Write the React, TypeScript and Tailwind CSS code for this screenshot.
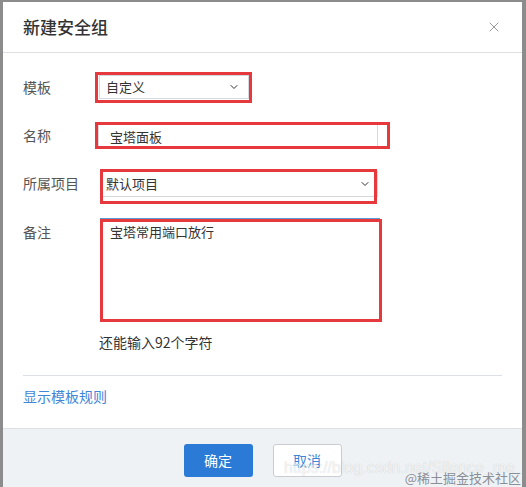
import { ChevronDown, X } from 'lucide-react';

const font = { fontFamily: '"Noto Sans CJK SC", "Noto Sans", sans-serif' };

// red annotation frame drawn over a form field
function Mark({ className }: { className: string }) {
  return <div className={`pointer-events-none absolute border-[3px] border-[#e5393e] ${className}`} />;
}

export default function App() {
  return (
    <div className="h-[487px] w-[526px] overflow-hidden bg-[#8c8c8c] pl-[3px] pt-[2px]" style={font}>
      <div className="relative flex h-[485px] w-[519px] flex-col bg-white">
        {/* header */}
        <div className="flex h-[51px] shrink-0 items-center justify-between border-b border-[#dcdfe3] pl-[20px] pr-[20px]">
          <div className="text-[17px] font-medium text-[#333]">新建安全组</div>
          <X className="h-4 w-4 text-[#999]" strokeWidth={1.5} />
        </div>

        {/* body */}
        <div className="flex flex-col px-[20px] text-[14px]">
          <div className="relative mt-[19px] flex h-[31px]">
            <div className="w-[72px] leading-[31px] text-[#555]">模板</div>
            <div className="ml-[4px] mt-[3px] flex h-[24px] w-[150px] items-center justify-between border border-[#d5d8dc] pl-[6px] pr-[8px] text-[13px] text-[#333]">
              <span>自定义</span>
              <ChevronDown className="h-3 w-3 text-[#333]" strokeWidth={2} />
            </div>
            <Mark className="left-[72px] top-0 h-[31px] w-[157px]" />
          </div>

          <div className="relative mt-[19px] flex h-[27px]">
            <div className="w-[72px] leading-[27px] text-[#555]">名称</div>
            <div className="ml-[3px] mt-[2px] flex h-[25px] w-[280px] items-center border border-[#d5d8dc] pl-[11px] text-[13px] text-[#333]">
              宝塔面板
            </div>
            <Mark className="left-[72px] top-0 h-[27px] w-[295px]" />
          </div>

          <div className="relative mt-[20px] flex h-[35px]">
            <div className="w-[72px] pt-[4px] leading-[20px] text-[#555]">所属项目</div>
            <div className="ml-[5px] mt-[2px] flex h-[26px] w-[278px] items-center justify-between border border-[#d5d8dc] pl-[5px] pr-[6px] text-[13px] text-[#333]">
              <span>默认项目</span>
              <ChevronDown className="h-3 w-3 text-[#333]" strokeWidth={2} />
            </div>
            <Mark className="left-[77px] top-0 h-[35px] w-[277px]" />
          </div>

          <div className="relative mt-[15px] flex h-[103px]">
            <div className="w-[72px] pt-[3px] leading-[20px] text-[#555]">备注</div>
            <div className="-mt-[1px] ml-[5px] h-[103px] w-[280px] border border-[#5b9bd5] pl-[9px] pt-[3px] text-[13px] leading-[20px] text-[#333]">
              宝塔常用端口放行
            </div>
            <Mark className="left-[77px] top-0 h-[103px] w-[282px]" />
          </div>

          <div className="ml-[76px] mt-[10px] leading-[20px] text-[#333]">还能输入92个字符</div>

          <div className="mt-[23px] border-t border-[#dcdfe3]" />

          <div className="mt-[10px] leading-[20px] text-[#3f86d6]">显示模板规则</div>
        </div>

        {/* footer */}
        <div className="mt-auto flex h-[59px] shrink-0 justify-center gap-[20px] border-t border-[#dcdfe3] bg-[#eff2f5] pt-[15px]">
          <button className="h-[33px] w-[69px] rounded-[3px] bg-[#2a7ad6] text-[14px] text-white">确定</button>
          <button className="h-[33px] w-[69px] rounded-[3px] border border-[#c9cdd2] bg-white text-[14px] text-[#3f86d6]">取消</button>
        </div>

        {/* watermarks */}
        <div
          className="pointer-events-none absolute left-[281px] top-[458px] text-[16px] leading-none text-white/75"
          style={{ fontFamily: '"Liberation Sans", sans-serif', textShadow: '0 0 1px rgba(0,0,0,0.2)' }}
        >
          https://blog.csdn.net/Silence_me
        </div>
        <div className="pointer-events-none absolute right-[1px] top-[469px] text-[13px] leading-none text-[#8a8f96]">
          @稀土掘金技术社区
        </div>
      </div>
    </div>
  );
}
